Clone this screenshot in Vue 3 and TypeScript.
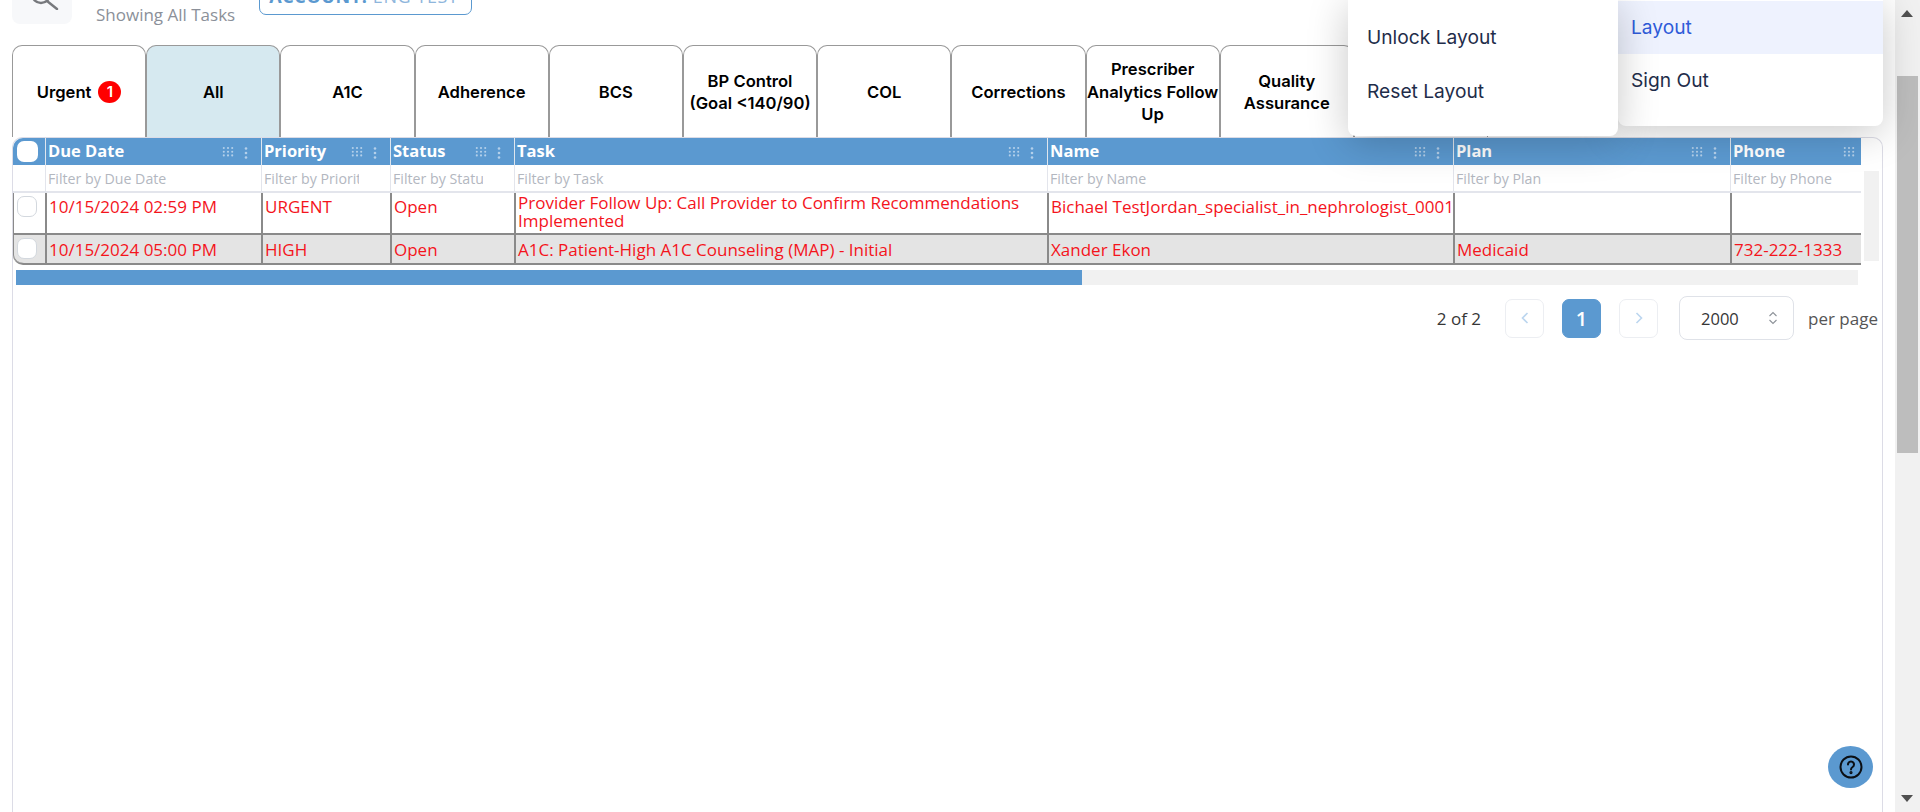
<script setup lang="ts">
interface Column { key: string; label: string; filter: string; kebab: boolean }

const tabs: string[] = [
  'Urgent', 'All', 'A1C', 'Adherence', 'BCS', 'BP Control (Goal\u00a0<140/90)', 'COL',
  'Corrections', 'Prescriber Analytics Follow Up', 'Quality Assurance', ''
]

const columns: Column[] = [
  { key: 'due', label: 'Due Date', filter: 'Filter by Due Date', kebab: true },
  { key: 'priority', label: 'Priority', filter: 'Filter by Priority', kebab: true },
  { key: 'status', label: 'Status', filter: 'Filter by Status', kebab: true },
  { key: 'task', label: 'Task', filter: 'Filter by Task', kebab: true },
  { key: 'name', label: 'Name', filter: 'Filter by Name', kebab: true },
  { key: 'plan', label: 'Plan', filter: 'Filter by Plan', kebab: true },
  { key: 'phone', label: 'Phone', filter: 'Filter by Phone', kebab: false }
]

const rows: Record<string, string>[] = [
  {
    due: '10/15/2024 02:59 PM', priority: 'URGENT', status: 'Open',
    task: 'Provider Follow Up: Call Provider to Confirm Recommendations Implemented',
    name: 'Bichael TestJordan_specialist_in_nephrologist_0001', plan: '', phone: ''
  },
  {
    due: '10/15/2024 05:00 PM', priority: 'HIGH', status: 'Open',
    task: 'A1C: Patient-High A1C Counseling (MAP) - Initial',
    name: 'Xander Ekon', plan: 'Medicaid', phone: '732-222-1333'
  }
]
const dots: [number, number][] = [
  [1, 1], [5, 1], [9, 1], [1, 4.5], [5, 4.5], [9, 4.5], [1, 8], [5, 8], [9, 8]
]
</script>

<template>
  <div class="screen">
    <main class="page">
      <header class="toolbar">
        <button class="search" aria-label="Search">
          <svg width="40" height="24" viewBox="0 0 40 24" fill="none" stroke="#77797d" stroke-width="2.4" stroke-linecap="round">
            <circle cx="19" cy="8" r="9" />
            <path d="M25 15 L35 23" />
          </svg>
        </button>
        <span class="showing">Showing All Tasks</span>
        <div class="account"><b>ACCOUNT:</b> ENG TEST</div>
      </header>

      <nav class="tabs">
        <div v-for="t in tabs" :key="t" class="tab" :class="{ active: t === 'All' }">
          <span>{{ t }}</span>
          <span v-if="t === 'Urgent'" class="count">1</span>
        </div>
      </nav>

      <section class="card">
        <div class="grid-wrap">
          <div class="table">
            <div class="row head">
              <div class="cell check-cell"><span class="check big"></span></div>
              <div v-for="c in columns" :key="c.key" class="cell">
                <span class="head-label">{{ c.label }}</span>
                <span class="tools" :class="{ solo: !c.kebab }">
                  <svg width="12" height="10" viewBox="0 0 10 9.5" fill="#b4d0ea">
                    <circle v-for="d in dots" :key="d.join()" :cx="d[0]" :cy="d[1]" r="1" />
                  </svg>
                  <svg v-if="c.kebab" width="4" height="12" viewBox="0 0 4 12" fill="#b4d0ea">
                    <circle cx="2" cy="1.5" r="1.3" /><circle cx="2" cy="6" r="1.3" /><circle cx="2" cy="10.5" r="1.3" />
                  </svg>
                </span>
              </div>
            </div>
            <div class="row filters">
              <div class="cell check-cell"></div>
              <div v-for="c in columns" :key="c.key" class="cell" :class="c.key">
                <input class="filter" :placeholder="c.filter" />
              </div>
            </div>
            <div v-for="(r, i) in rows" :key="i" class="row data" :class="i === 0 ? 'first' : 'second'">
              <div class="cell check-cell"><span class="check"></span></div>
              <div v-for="c in columns" :key="c.key" class="cell" :class="c.key">{{ r[c.key] }}</div>
            </div>
          </div>
          <div class="vbar"></div>
        </div>
        <div class="hbar"><div class="hthumb"></div></div>

        <div class="pager">
          <span class="count-text">2 of 2</span>
          <button class="page-btn" aria-label="Previous">
            <svg width="10" height="14" viewBox="0 0 10 14" fill="none" stroke="#bcd6ef" stroke-width="1.6"><path d="M7.5 2 L2.5 7 L7.5 12" /></svg>
          </button>
          <button class="page-btn current">1</button>
          <button class="page-btn" aria-label="Next">
            <svg width="10" height="14" viewBox="0 0 10 14" fill="none" stroke="#bcd6ef" stroke-width="1.6"><path d="M2.5 2 L7.5 7 L2.5 12" /></svg>
          </button>
          <div class="select">
            <span>2000</span>
            <svg width="10" height="14" viewBox="0 0 10 14" fill="none" stroke="#8d9299" stroke-width="1.1"><path d="M1.5 5 L5 1.5 L8.5 5 M1.5 9 L5 12.5 L8.5 9" /></svg>
          </div>
          <span class="per">per page</span>
        </div>
      </section>
    </main>

    <aside class="scrollbar">
      <svg class="arrow" width="12" height="7" viewBox="0 0 12 7" fill="#505050"><path d="M6 0 L12 7 H0 Z" /></svg>
      <div class="thumb"></div>
      <svg class="arrow down" width="12" height="7" viewBox="0 0 12 7" fill="#505050"><path d="M0 0 H12 L6 7 Z" /></svg>
    </aside>

    <div class="menu sub">
      <a class="item">Unlock Layout</a>
      <a class="item">Reset Layout</a>
    </div>
    <div class="menu main-menu">
      <a class="item selected">Layout</a>
      <a class="item">Sign Out</a>
    </div>

    <button class="help" aria-label="Help">
      <svg width="24" height="24" viewBox="0 0 24 24" fill="none" stroke="#0b0f14" stroke-width="2" stroke-linecap="round">
        <circle cx="12" cy="12" r="10.5" />
        <path d="M9 9.4 A3 3 0 1 1 13.6 12 C12.5 12.7 12 13.2 12 14.4" />
        <circle cx="12" cy="17.6" r="0.6" fill="#0b0f14" />
      </svg>
    </button>
  </div>
</template>

<style>
html, body { margin: 0; overflow: hidden; background: #fff; }
</style>

<style scoped>
.screen {
  position: relative;
  display: flex;
  height: 812px;
  overflow: hidden;
  background: #fff;
  font-family: "Open Sans", "Liberation Sans", sans-serif;
}
.page { flex: 1; min-width: 0; padding-left: 12px; }

.toolbar { display: flex; align-items: flex-end; height: 30px; overflow: hidden; }
.search {
  flex: none; width: 60px; height: 40px; margin-bottom: 6px; padding: 0;
  display: flex; align-items: flex-end; justify-content: center;
  border: 0; border-radius: 8px; background: #f7f8fa;
}
.search svg { margin-bottom: 14px; }
.showing { margin: 0 0 5px 24px; font-size: 17px; line-height: 20px; color: #8b9099; white-space: nowrap; }
.account {
  margin: 0 0 15px 24px; padding: 0 9px; width: 193px; height: 30px; line-height: 24px;
  flex: none; box-sizing: content-box;
  border: 1px solid #5b99d0; border-radius: 7px; font-size: 18px; letter-spacing: .6px; color: #8fb6dc; white-space: nowrap;
}
.account b { color: #5b99d0; }

.tabs { display: flex; margin-top: 15px; padding-left: 0; height: 92px; }
.tab {
  flex: none; box-sizing: border-box; width: 134.2px; height: 92px; padding-top: 1px;
  display: flex; align-items: center; justify-content: center; gap: 7px;
  border: 1px solid #999; border-bottom: 0; border-radius: 10px 10px 0 0;
  background: #fff; color: #000; text-align: center;
  font-family: Inter, "Liberation Sans", sans-serif; font-weight: 600; font-size: 16.6px; line-height: 22.5px;
}
.tab.active { background: #d6e9f0; }
.count {
  flex: none; width: 23px; height: 22px; border-radius: 50%; background: #f00; color: #fff;
  font-size: 15px; line-height: 22px; text-align: center;
}

.card {
  box-sizing: border-box; width: 1871px; height: 700px;
  border: 1px solid #dcdce6; border-bottom: 0; border-radius: 10px 10px 0 0;
}
.grid-wrap { display: flex; }
.table { flex: none; width: 1848px; }
.row {
  display: grid;
  grid-template-columns: 32px 216px 129px 124px 533px 406px 277px 131px;
}
.cell { box-sizing: border-box; min-width: 0; padding-left: 2px; border-left: 1px solid transparent; }
.cell:first-child { border-left: 0; padding-left: 4px; }

.head { height: 27px; background: #5b99d0; border-radius: 10px 0 0 0; }
.head .cell {
  position: relative; display: flex; align-items: center; padding-bottom: 2px; border-left-color: #dfe6ee;
  color: #fff; font-weight: 700; font-size: 16.5px;
}
.head .cell:first-child { border-left: 0; padding-bottom: 0; }
.head-label { white-space: nowrap; }
.tools { position: absolute; right: 13px; top: 9px; display: flex; gap: 10px; }
.tools.solo { right: 6px; }

.filters { height: 28px; border-bottom: 2px solid #e3e5ec; box-sizing: border-box; }
.filters .cell { display: flex; align-items: center; padding-top: 1px; border-left-color: #e3e5ec; }
.filters .cell:first-child { border-left: 0; }
.filter {
  width: calc(100% - 31px); min-width: 0; padding: 0; border: 0; outline: 0; background: transparent;
  font: 14.2px "Open Sans", sans-serif;
}
.filters .task .filter, .filters .name .filter, .filters .phone .filter { width: 100%; }
.filter::placeholder { color: #b3b7bf; opacity: 1; }

.data { box-sizing: border-box; border-bottom: 2px solid #8a8a8a; box-shadow: inset 1px 0 0 #8a8a8a; }
.data .cell {
  margin-left: 0; border-left: 2px solid #8a8a8a; padding-left: 2px;
  color: #f4141c; font-size: 17px; line-height: 18px; white-space: nowrap;
}
.data .cell:first-child { border-left: 0; padding-left: 4px; }
.first { height: 42px; }
.first .cell { padding-top: 5px; }
.first .cell.task { padding-top: 1px; white-space: normal; line-height: 18px; }
.second { height: 30px; background: #e4e4e4; border-radius: 0 0 0 10px; }
.second .cell { padding-top: 6px; }
.check-cell { display: flex; }
.first .check-cell { padding-top: 3px !important; }
.second .check-cell { padding-top: 3px !important; }
.check {
  box-sizing: border-box; display: block; width: 20px; height: 21px;
  border: 1px solid #d3d8de; border-radius: 7px; background: #fff;
}
.check.big { margin-top: 0; border: 0; width: 21px; }

.vbar { flex: none; width: 15px; height: 90px; margin: 33px 0 0 3px; background: #f1f1f1; }
.hbar { width: 1842px; height: 15px; margin: 5px 0 0 3px; background: #f1f1f1; }
.hthumb { width: 1066px; height: 100%; background: #5b99d0; }

.pager { display: flex; align-items: center; justify-content: flex-end; height: 44px; margin-top: 11px; padding-right: 4px; color: #333; font-size: 16.5px; }
.count-text { margin-right: 24px; color: #363636; font-size: 17px; }
.page-btn {
  box-sizing: border-box; width: 39px; height: 39px; padding: 0; margin-right: 18px;
  display: flex; align-items: center; justify-content: center;
  border: 1px solid #eceef2; border-radius: 7px; background: #fff;
  font: 600 20px "Open Sans", sans-serif;
}
.page-btn.current { background: #5b99d0; border-color: #5b99d0; color: #fff; }
.page-btn:nth-of-type(3) { margin-right: 21px; }
.select {
  box-sizing: border-box; width: 115px; height: 44px; margin-right: 14px; padding: 0 15px 0 21px;
  display: flex; align-items: center; justify-content: space-between;
  border: 1px solid #dfe2e8; border-radius: 8px; color: #363636;
}
.per { color: #555; font-size: 17px; }

.scrollbar { position: relative; flex: none; width: 25px; background: #f1f1f1; }
.thumb { position: absolute; left: 2px; right: 2px; top: 76px; height: 377px; background: #bdbdbd; }
.arrow { position: absolute; left: 6px; top: 10px; }
.arrow.down { top: 795px; }

.menu {
  position: absolute; top: 0; background: #fff; box-shadow: 0 6px 40px rgba(0, 0, 0, .22);
  border-radius: 0 0 8px 8px; color: #1f2d4a;
  font-family: Inter, "Liberation Sans", sans-serif; font-size: 19.2px;
}
.sub { z-index: 3; left: 1348px; width: 270px; height: 136px; padding-top: 10px; box-sizing: border-box; }
.main-menu { z-index: 2; left: 1618px; width: 265px; height: 126px; padding-top: 1px; box-sizing: border-box; }
.item { display: flex; align-items: center; height: 54px; padding-left: 19px; }
.main-menu .item { box-sizing: border-box; height: 53px; padding-left: 13px; padding-bottom: 2px; }
.item.selected { background: #eef2fe; color: #2f5bd9; }

.help {
  position: absolute; z-index: 4; left: 1828px; top: 746px; width: 45px; height: 42px; padding: 0;
  display: flex; align-items: center; justify-content: center;
  border: 0; border-radius: 50%; background: #5b99d0;
}
</style>
